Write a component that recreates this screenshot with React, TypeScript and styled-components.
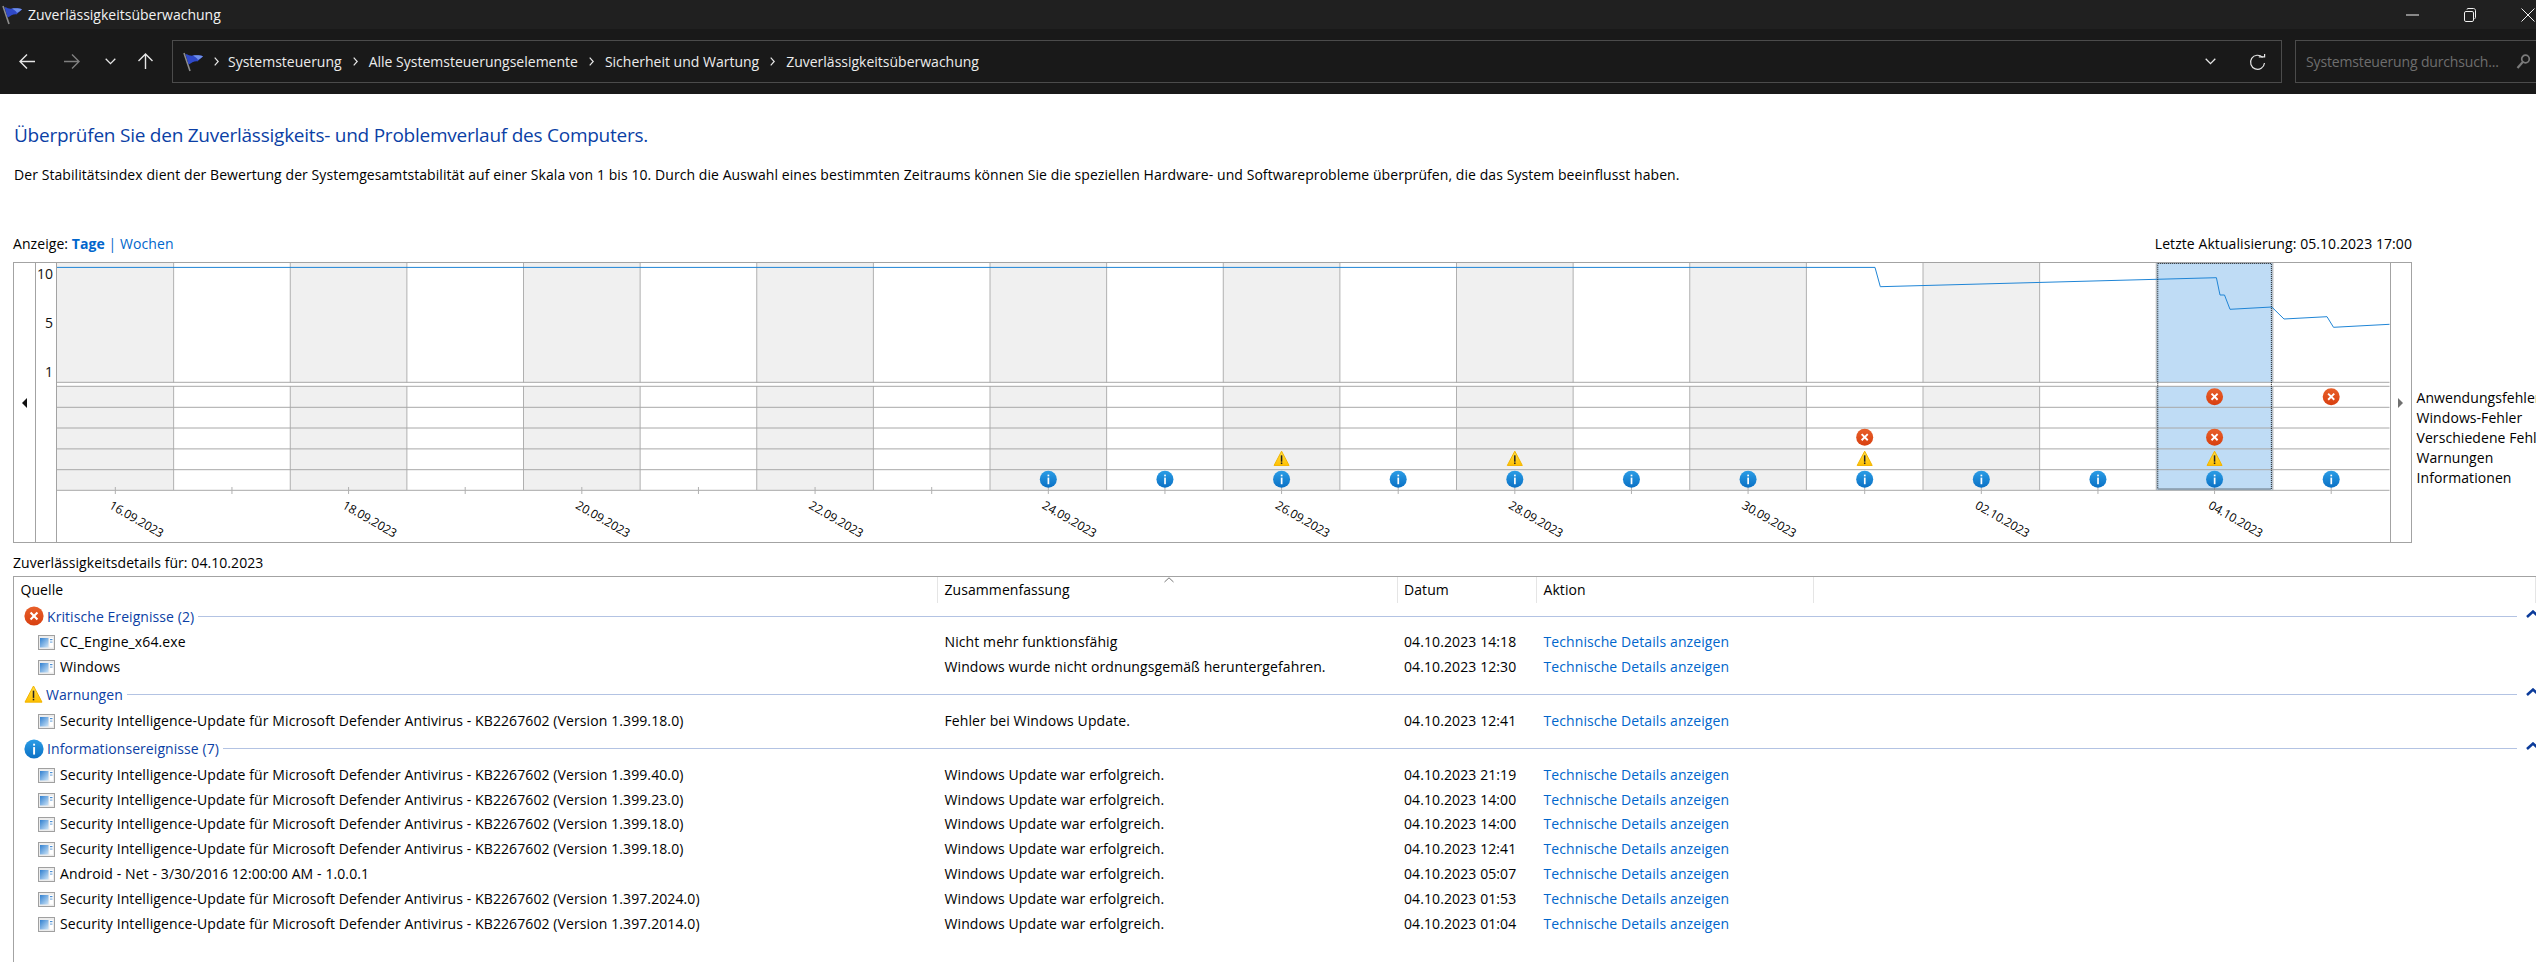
import React from "react";
import styled, { createGlobalStyle } from "styled-components";

const FONT = `"Open Sans", "Noto Sans", "Liberation Sans", sans-serif`;

const Global = createGlobalStyle`
  html, body { margin: 0; padding: 0; background: #fff; overflow: hidden; }
  body { font-family: ${FONT}; font-size: 14px; color: #000; }
  #root { width: 2536px; height: 962px; overflow: hidden; }
`;

const Page = styled.div`
  display: flex;
  flex-direction: column;
  width: 2536px;
  height: 962px;
  overflow: hidden;
`;

const TitleBar = styled.header`
  flex: 0 0 29px;
  display: flex;
  align-items: center;
  background: #202020;
  color: #f2f2f2;
  padding-left: 2px;
`;
const WindowTitle = styled.span`
  margin-left: 5px;
  font-size: 14px;
  flex: 1;
`;
const WinButton = styled.span`
  flex: 0 0 58px;
  display: flex;
  justify-content: center;
  align-items: center;
  &:last-child { margin-right: -21px; }
`;

const Toolbar = styled.nav`
  flex: 0 0 65px;
  display: flex;
  align-items: center;
  background: #191919;
`;
const NavButton = styled.span<{ $w: number }>`
  flex: 0 0 ${(p) => p.$w}px;
  display: flex;
  justify-content: center;
  align-items: center;
`;
const AddressBox = styled.div`
  flex: 0 0 2110px;
  box-sizing: border-box;
  height: 43px;
  margin-left: 14px;
  border: 1px solid #4b4b4b;
  display: flex;
  align-items: center;
  padding-left: 10px;
  color: #ececec;
`;
const Crumb = styled.span`
  font-size: 14px;
`;
const CrumbSep = styled.span<{ $first?: boolean }>`
  flex: 0 0 ${(p) => (p.$first ? 24 : 27)}px;
  display: flex;
  justify-content: center;
`;
const AddressActions = styled.div`
  margin-left: auto;
  display: flex;
  align-items: center;
`;
const ActionIcon = styled.span<{ $w: number }>`
  flex: 0 0 ${(p) => p.$w}px;
  display: flex;
  justify-content: center;
`;
const SearchBox = styled.div`
  flex: 0 0 260px;
  box-sizing: border-box;
  height: 43px;
  margin-left: 13px;
  border: 1px solid #4b4b4b;
  display: flex;
  align-items: center;
  padding-left: 10px;
  color: #6e6e6e;
  font-size: 14px;
  letter-spacing: -0.15px;
  gap: 17px;
`;

const Content = styled.main`
  flex: 1;
  display: flex;
  flex-direction: column;
  padding-left: 13px;
  min-height: 0;
`;
const Heading = styled.h1`
  margin: 28px 0 0 1px;
  font-size: 19px;
  line-height: 26px;
  font-weight: 400;
  color: #0b3fa5;
  letter-spacing: -0.24px;
  white-space: nowrap;
`;
const Intro = styled.p`
  margin: 18px 0 0 1px;
  font-size: 14px;
  line-height: 18px;
  letter-spacing: 0.07px;
  white-space: nowrap;
`;
const ViewRow = styled.div`
  margin-top: 51px;
  width: 2399px;
  display: flex;
  justify-content: space-between;
  line-height: 18px;
  font-size: 14px;
  letter-spacing: 0.07px;
`;
const ActiveView = styled.strong`
  color: #0066cc;
  font-weight: 700;
`;
const ViewLink = styled.span`
  color: #0066cc;
`;
const ChartRow = styled.section`
  margin-top: 9px;
  display: flex;
  gap: 4.5px;
  align-items: flex-start;
`;
const ChartFrame = styled.div`
  flex: 0 0 2399px;
  box-sizing: border-box;
  height: 281px;
  border: 1px solid #a3a3a3;
  display: flex;
`;
const ArrowCell = styled.div<{ $w: number; $side: "left" | "right" }>`
  flex: 0 0 ${(p) => p.$w}px;
  display: flex;
  justify-content: center;
  align-items: center;
  box-sizing: border-box;
  ${(p) =>
    p.$side === "left"
      ? "border-right: 1px solid #a3a3a3;"
      : "border-left: 1px solid #a3a3a3;"}
`;
const Triangle = styled.span<{ $side: "left" | "right" }>`
  width: 0;
  height: 0;
  border-top: 5px solid transparent;
  border-bottom: 5px solid transparent;
  ${(p) =>
    p.$side === "left"
      ? "border-right: 5px solid #111;"
      : "border-left: 5px solid #707070;"}
`;
const AxisCell = styled.div`
  flex: 0 0 21px;
  box-sizing: border-box;
  border-right: 1px solid #a3a3a3;
  display: flex;
  flex-direction: column;
  align-items: flex-end;
  padding: 1px 3px 0 0;
  gap: 29px;
  font-size: 14px;
  line-height: 20px;
  color: #111;
`;
const Plot = styled.svg`
  flex: 0 0 2332.5px;
  width: 2332.5px;
  height: 279px;
  display: block;
`;
const DateLabel = styled.text`
  font-family: ${FONT};
  font-size: 12px;
  letter-spacing: -0.1px;
  fill: #000;
`;
const Legend = styled.ul`
  margin: 0;
  padding: 125.6px 0 0;
  list-style: none;
  white-space: nowrap;
  font-size: 14px;
  line-height: 20.1px;
  letter-spacing: 0.07px;
`;
const DetailsLabel = styled.div`
  margin-top: 11px;
  line-height: 18px;
  font-size: 14px;
  letter-spacing: 0.07px;
`;
const Table = styled.section`
  flex: 1;
  margin-top: 4px;
  border-top: 1px solid #a3a3a3;
  border-left: 1px solid #a3a3a3;
  min-height: 0;
`;
const columns = "924px 459.5px 139.5px 277px 1fr";
const HeaderRow = styled.div`
  position: relative;
  display: grid;
  grid-template-columns: ${columns};
  height: 26px;
  line-height: 26px;
  font-size: 14px;
  letter-spacing: 0.07px;
`;
const HeaderCell = styled.div`
  padding-left: 6.5px;
  border-right: 1px solid #e5e5e5;
  box-sizing: border-box;
  &:last-child { border-right: none; }
`;
const SortCaret = styled.svg`
  position: absolute;
  left: 1150px;
  top: 0;
`;
const GroupHead = styled.div`
  display: flex;
  align-items: center;
  height: 26px;
  padding-left: 10px;
`;
const GroupTitle = styled.span`
  margin-left: 3px;
  color: #0b3fa5;
  font-size: 14px;
  letter-spacing: 0.07px;
  white-space: nowrap;
`;
const GroupLine = styled.span`
  flex: 1 0 auto;
  height: 1px;
  margin-left: 4px;
  background: #b3c3e3;
`;
const GroupEnd = styled.span`
  flex: 0 0 19.3px;
  display: flex;
  justify-content: flex-end;
  overflow: visible;
  margin-top: -5px;
`;
const Group = styled.div`
  margin-bottom: 2px;
`;
const Rows = styled.div`
  margin-top: 1px;
`;
const Row = styled.div`
  display: grid;
  grid-template-columns: ${columns};
  height: 24.9px;
  line-height: 24.9px;
  font-size: 14px;
  letter-spacing: 0.1px;
  white-space: nowrap;
`;
const SourceCell = styled.div`
  display: flex;
  align-items: center;
  gap: 5px;
  padding-left: 24px;
`;
const Cell = styled.div`
  padding-left: 6.5px;
`;
const LinkCell = styled(Cell)`
  color: #0066cc;
`;

/* ---------- icons ---------- */
const FlagIcon = () => (
  <svg width="21" height="20" viewBox="0 0 21 20">
    <path d="M1 1 L7 19" stroke="#8d8d8d" strokeWidth="1.6" fill="none" />
    <path d="M2.4 2 C6 3 7 4 10 3.6 C13 3.2 17 3 20 4.5 C18 6 16 8 14.4 9.4 C11 9 8.5 11 5.6 12.6 Z" fill="#2f49c8" />
    <path d="M10 3.6 C13 3.2 17 3 20 4.5 C18 6 16.5 7 15 8 C14 6 12 5 10 3.6 Z" fill="#6f8fe8" />
  </svg>
);
const NavArrow = ({ dir, color }: { dir: "left" | "right" | "up"; color: string }) => {
  const rot = dir === "left" ? 0 : dir === "right" ? 180 : 90;
  return (
    <svg width="17" height="17" viewBox="0 0 17 17">
      <path d="M1 8.5H16M8 1.5L1 8.5L8 15.5" fill="none" stroke={color} strokeWidth="1.4" transform={`rotate(${rot} 8.5 8.5)`} />
    </svg>
  );
};
const SmallChevron = ({ color = "#e6e6e6", w = 11 }: { color?: string; w?: number }) => (
  <svg width={w} height="7" viewBox="0 0 11 7">
    <path d="M0.7 0.8L5.5 5.6L10.3 0.8" fill="none" stroke={color} strokeWidth="1.3" />
  </svg>
);
const CrumbChevron = () => (
  <svg width="5" height="9" viewBox="0 0 5 9">
    <path d="M0.7 0.7L4.2 4.5L0.7 8.3" fill="none" stroke="#e8e8e8" strokeWidth="1.2" />
  </svg>
);
const RefreshIcon = () => (
  <svg width="17" height="18" viewBox="0 0 17 18">
    <path d="M13.6 4.4A7 7 0 1 0 15.5 10" fill="none" stroke="#e6e6e6" strokeWidth="1.2" />
    <path d="M9.8 3.9H15.6V1" fill="none" stroke="#e6e6e6" strokeWidth="1.2" />
  </svg>
);
const SearchIcon = () => (
  <svg width="15" height="17" viewBox="0 0 15 17">
    <circle cx="9.5" cy="6" r="3.8" fill="none" stroke="#7a7a7a" strokeWidth="1.7" />
    <path d="M6.8 9L1.5 15" stroke="#7a7a7a" strokeWidth="2.2" />
  </svg>
);
const MinimizeIcon = () => (
  <svg width="13" height="2" viewBox="0 0 13 2"><path d="M0 1H13" stroke="#f0f0f0" strokeWidth="1" /></svg>
);
const RestoreIcon = () => (
  <svg width="12" height="14" viewBox="0 0 12 14">
    <rect x="0.5" y="3.5" width="9" height="10" rx="1.4" fill="none" stroke="#f0f0f0" />
    <path d="M3 1.5C3 .8 3.4 .5 4 .5H9.5C10.6 .5 11.5 1.4 11.5 2.5V9.5C11.5 10.2 11.2 10.6 10.5 10.6" fill="none" stroke="#f0f0f0" />
  </svg>
);
const CloseIcon = () => (
  <svg width="14" height="14" viewBox="0 0 14 14"><path d="M.5 .5L13.5 13.5M13.5 .5L.5 13.5" stroke="#f0f0f0" strokeWidth="1" /></svg>
);
const ErrorGlyph = ({ x, y, r }: { x: number; y: number; r: number }) => {
  const a = r * 0.36;
  return (
    <g>
      <circle cx={x} cy={y} r={r} fill="url(#errGrad)" />
      <path d={`M${x - a} ${y - a}L${x + a} ${y + a}M${x + a} ${y - a}L${x - a} ${y + a}`} stroke="#fff" strokeWidth={r * 0.22} fill="none" />
    </g>
  );
};
const InfoGlyph = ({ x, y, r }: { x: number; y: number; r: number }) => (
  <g>
    <circle cx={x} cy={y} r={r} fill="url(#infoGrad)" />
    <rect x={x - r * 0.09} y={y - r * 0.2} width={r * 0.2} height={r * 0.78} fill="#fff" />
    <rect x={x - r * 0.09} y={y - r * 0.55} width={r * 0.2} height={r * 0.2} fill="#fff" />
  </g>
);
const WarnGlyph = ({ x, y, s }: { x: number; y: number; s: number }) => {
  const h = s * 0.5;
  return (
    <g>
      <path d={`M${x} ${y - h}L${x + h} ${y + h * 0.9}H${x - h}Z`} fill="url(#warnGrad)" stroke="#f2b400" strokeWidth="1" strokeLinejoin="round" />
      <rect x={x - 0.75} y={y - h * 0.45} width="1.5" height={h * 0.85} fill="#222" />
      <rect x={x - 0.75} y={y + h * 0.5} width="1.5" height="1.6" fill="#222" />
    </g>
  );
};
const Defs = () => (
  <defs>
    <linearGradient id="errGrad" x1="0" y1="0" x2="0" y2="1">
      <stop offset="0" stopColor="#e8602a" />
      <stop offset="1" stopColor="#d83f10" />
    </linearGradient>
    <linearGradient id="infoGrad" x1="0" y1="0" x2="0" y2="1">
      <stop offset="0" stopColor="#2b9de6" />
      <stop offset="1" stopColor="#0a70c4" />
    </linearGradient>
    <linearGradient id="warnGrad" x1="0" y1="0" x2="0" y2="1">
      <stop offset="0" stopColor="#ffe04a" />
      <stop offset="1" stopColor="#ffc000" />
    </linearGradient>
    <linearGradient id="appGrad" x1="0" y1="0" x2="1" y2="1">
      <stop offset="0" stopColor="#2f7fd0" />
      <stop offset="1" stopColor="#cfe5f7" />
    </linearGradient>
  </defs>
);
const GroupErrorIcon = () => (
  <svg width="20" height="20" viewBox="0 0 20 20"><ErrorGlyph x={10} y={10} r={9.6} /></svg>
);
const GroupWarnIcon = () => (
  <svg width="19" height="19" viewBox="0 0 19 19"><WarnGlyph x={9.5} y={9.5} s={17} /></svg>
);
const GroupInfoIcon = () => (
  <svg width="20" height="20" viewBox="0 0 20 20"><InfoGlyph x={10} y={10} r={9.6} /></svg>
);
const AppIcon = () => (
  <svg width="17" height="15" viewBox="0 0 17 15">
    <rect x="0.5" y="0.5" width="16" height="14" fill="#ececec" stroke="#a0a0a0" />
    <rect x="2" y="3" width="8.5" height="9.5" fill="url(#appGrad)" />
    <rect x="11.5" y="3" width="3.5" height="9.5" fill="#fff" />
    <rect x="12" y="4" width="2.5" height="1.2" fill="#4c8fd4" />
    <rect x="12" y="6.5" width="2.5" height="1.2" fill="#7fb0e0" />
  </svg>
);
const CollapseSvg = styled.svg`
  flex: 0 0 14px;
  margin-right: -4px;
`;
const Collapse = () => (
  <CollapseSvg width="14" height="8" viewBox="0 0 14 8">
    <path d="M1 7L7 1.6L13 7" fill="none" stroke="#0b3b9a" strokeWidth="2.6" />
  </CollapseSvg>
);

/* ---------- chart ---------- */
const X0 = 57;
const CW = 116.625;
const colX = (c: number) => X0 + CW * c;
const colC = (c: number) => colX(c) + CW / 2;
const ROWS = [386.3, 407.3, 428, 448.9, 469.7, 490.3];
const ROW_C = [396.7, 417, 437.2, 458.7, 479.3];
const dates = [
  "16.09.2023", "18.09.2023", "20.09.2023", "22.09.2023", "24.09.2023",
  "26.09.2023", "28.09.2023", "30.09.2023", "02.10.2023", "04.10.2023",
];
const linePts =
  "57,267.4 1875,267.4 1880.3,286.7 2216.4,277.7 2220,295 2224.5,295 2230,309.3 2271.8,307 2284,319 2327,316.7 2333.5,327.3 2389.5,324.3";
const infoCols = [8, 9, 10, 11, 12, 13, 14, 15, 16, 17, 18, 19];
const warnCols = [10, 12, 15, 18];
const errs: [number, number][] = [[15, 2], [18, 0], [18, 2], [19, 0]];

const ChartPlot = () => {
  const cols = Array.from({ length: 20 }, (_, i) => i);
  return (
    <Plot viewBox="57 263 2332.5 279">
      <Defs />
      {cols.filter((c) => c % 2 === 0 && c !== 18).map((c) => (
        <rect key={c} x={colX(c)} y={263} width={CW} height={227.5} fill="#f0f0f0" />
      ))}
      <rect x={colX(18)} y={263} width={CW} height={227.5} fill="#bfdcf5" />
      {cols.slice(1).map((c) => (
        <line key={c} x1={colX(c)} x2={colX(c)} y1={263} y2={490} stroke="#b0b0b0" strokeWidth="1" />
      ))}
      <rect x={57} y={382.6} width={2332.5} height={3.4} fill="#fff" />
      <line x1={57} x2={2389.5} y1={382.3} y2={382.3} stroke="#a8a8a8" strokeWidth="1" />
      {ROWS.map((y) => (
        <line key={y} x1={57} x2={2389.5} y1={y} y2={y} stroke="#a8a8a8" strokeWidth="1" />
      ))}
      {cols.map((c) => (
        <line key={c} x1={colC(c)} x2={colC(c)} y1={487} y2={494} stroke="#b0b0b0" strokeWidth="1" />
      ))}
      <polyline points={linePts} fill="none" stroke="#1f85d6" strokeWidth="1" />
      <rect x={colX(18) + 1.5} y={263.5} width={CW - 3} height={225.5} fill="none" stroke="#111" strokeWidth="1" strokeDasharray="1 1" />
      {errs.map(([c, r]) => <ErrorGlyph key={`${c}-${r}`} x={colC(c)} y={ROW_C[r]} r={8.5} />)}
      {warnCols.map((c) => <WarnGlyph key={c} x={colC(c)} y={ROW_C[3]} s={15} />)}
      {infoCols.map((c) => <InfoGlyph key={c} x={colC(c)} y={ROW_C[4]} r={8.5} />)}
      {dates.map((d, i) => {
        const x = colC(i * 2) - 7;
        return (
          <DateLabel key={d} x={x} y={507.8} transform={`rotate(30 ${x} 507.8)`}>{d}</DateLabel>
        );
      })}
    </Plot>
  );
};

/* ---------- data ---------- */
const SI = "Security Intelligence-Update für Microsoft Defender Antivirus - KB2267602";
const OK = "Windows Update war erfolgreich.";
const groups = [
  {
    title: "Kritische Ereignisse (2)",
    icon: <GroupErrorIcon />,
    rows: [
      ["CC_Engine_x64.exe", "Nicht mehr funktionsfähig", "04.10.2023 14:18"],
      ["Windows", "Windows wurde nicht ordnungsgemäß heruntergefahren.", "04.10.2023 12:30"],
    ],
  },
  {
    title: "Warnungen",
    icon: <GroupWarnIcon />,
    rows: [[`${SI} (Version 1.399.18.0)`, "Fehler bei Windows Update.", "04.10.2023 12:41"]],
  },
  {
    title: "Informationsereignisse (7)",
    icon: <GroupInfoIcon />,
    rows: [
      [`${SI} (Version 1.399.40.0)`, OK, "04.10.2023 21:19"],
      [`${SI} (Version 1.399.23.0)`, OK, "04.10.2023 14:00"],
      [`${SI} (Version 1.399.18.0)`, OK, "04.10.2023 14:00"],
      [`${SI} (Version 1.399.18.0)`, OK, "04.10.2023 12:41"],
      ["Android - Net - 3/30/2016 12:00:00 AM - 1.0.0.1", OK, "04.10.2023 05:07"],
      [`${SI} (Version 1.397.2024.0)`, OK, "04.10.2023 01:53"],
      [`${SI} (Version 1.397.2014.0)`, OK, "04.10.2023 01:04"],
    ],
  },
];
const crumbs = ["Systemsteuerung", "Alle Systemsteuerungselemente", "Sicherheit und Wartung", "Zuverlässigkeitsüberwachung"];
const legend = ["Anwendungsfehler", "Windows-Fehler", "Verschiedene Fehler", "Warnungen", "Informationen"];

export default function App() {
  return (
    <Page>
      <Global />
      <TitleBar>
        <FlagIcon />
        <WindowTitle>Zuverlässigkeitsüberwachung</WindowTitle>
        <WinButton><MinimizeIcon /></WinButton>
        <WinButton><RestoreIcon /></WinButton>
        <WinButton><CloseIcon /></WinButton>
      </TitleBar>
      <Toolbar>
        <NavButton $w={54}><NavArrow dir="left" color="#e6e6e6" /></NavButton>
        <NavButton $w={34}><NavArrow dir="right" color="#7f7f7f" /></NavButton>
        <NavButton $w={44}><SmallChevron /></NavButton>
        <NavButton $w={26}><NavArrow dir="up" color="#e6e6e6" /></NavButton>
        <AddressBox>
          <FlagIcon />
          {crumbs.map((c, i) => (
            <React.Fragment key={c}>
              <CrumbSep $first={i === 0}><CrumbChevron /></CrumbSep>
              <Crumb>{c}</Crumb>
            </React.Fragment>
          ))}
          <AddressActions>
            <ActionIcon $w={47}><SmallChevron /></ActionIcon>
            <ActionIcon $w={47}><RefreshIcon /></ActionIcon>
          </AddressActions>
        </AddressBox>
        <SearchBox>
          <span>Systemsteuerung durchsuch...</span>
          <SearchIcon />
        </SearchBox>
      </Toolbar>
      <Content>
        <Heading>Überprüfen Sie den Zuverlässigkeits- und Problemverlauf des Computers.</Heading>
        <Intro>
          Der Stabilitätsindex dient der Bewertung der Systemgesamtstabilität auf einer Skala von 1 bis 10. Durch die Auswahl eines bestimmten Zeitraums können Sie die speziellen Hardware- und Softwareprobleme überprüfen, die das System beeinflusst haben.
        </Intro>
        <ViewRow>
          <span>Anzeige: <ActiveView>Tage</ActiveView> <ViewLink>|</ViewLink> <ViewLink>Wochen</ViewLink></span>
          <span>Letzte Aktualisierung: 05.10.2023 17:00</span>
        </ViewRow>
        <ChartRow>
          <ChartFrame>
            <ArrowCell $w={22} $side="left"><Triangle $side="left" /></ArrowCell>
            <AxisCell><span>10</span><span>5</span><span>1</span></AxisCell>
            <ChartPlot />
            <ArrowCell $w={21.5} $side="right"><Triangle $side="right" /></ArrowCell>
          </ChartFrame>
          <Legend>{legend.map((l) => <li key={l}>{l}</li>)}</Legend>
        </ChartRow>
        <DetailsLabel>Zuverlässigkeitsdetails für: 04.10.2023</DetailsLabel>
        <Table>
          <HeaderRow>
            <HeaderCell>Quelle</HeaderCell>
            <HeaderCell>Zusammenfassung</HeaderCell>
            <HeaderCell>Datum</HeaderCell>
            <HeaderCell>Aktion</HeaderCell>
            <HeaderCell />
            <SortCaret width="10" height="6" viewBox="0 0 10 6">
              <path d="M0.5 5L5 0.8L9.5 5" fill="none" stroke="#777" strokeWidth="1" />
            </SortCaret>
          </HeaderRow>
          {groups.map((g) => (
            <Group key={g.title}>
              <GroupHead>
                {g.icon}
                <GroupTitle>{g.title}</GroupTitle>
                <GroupLine />
                <GroupEnd><Collapse /></GroupEnd>
              </GroupHead>
              <Rows>
                {g.rows.map((r, i) => (
                  <Row key={i}>
                    <SourceCell><AppIcon /><span>{r[0]}</span></SourceCell>
                    <Cell>{r[1]}</Cell>
                    <Cell>{r[2]}</Cell>
                    <LinkCell>Technische Details anzeigen</LinkCell>
                  </Row>
                ))}
              </Rows>
            </Group>
          ))}
        </Table>
      </Content>
    </Page>
  );
}
